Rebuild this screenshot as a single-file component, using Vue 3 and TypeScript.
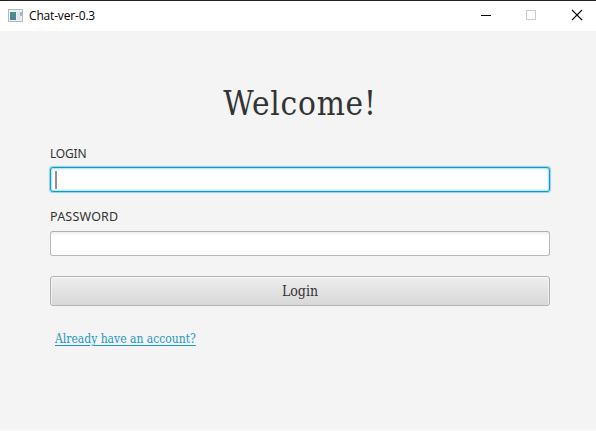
<script setup lang="ts">
import { ref } from 'vue'

const login = ref('')
const password = ref('')
</script>

<template>
  <div class="window">
    <header class="titlebar">
      <svg class="app-icon" width="16" height="14" viewBox="0 0 16 14">
        <rect x="0.5" y="0.5" width="14" height="12" fill="#eef1f4" stroke="#b4b9be" />
        <rect x="2" y="3" width="6" height="8" fill="#488e8c" />
        <rect x="2" y="8" width="6" height="3" fill="#4f7f9b" />
        <rect x="9" y="3" width="3" height="8" fill="#dce5ef" />
        <rect x="12" y="3" width="2" height="4" fill="#a3b8b9" />
      </svg>
      <span class="title">Chat-ver-0.3</span>
      <svg class="controls" width="104" height="14" viewBox="0 0 104 14" fill="none">
        <path d="M0 6.5H10" stroke="#000" />
        <rect x="45.5" y="1.5" width="9" height="9" stroke="#ccc" />
        <path d="M91 1L101 11M101 1L91 11" stroke="#000" stroke-width="1.1" />
      </svg>
    </header>
    <main class="content">
      <h1>Welcome!</h1>
      <label class="login-label" for="login">LOGIN</label>
      <div class="field focused">
        <i class="caret"></i>
        <input id="login" v-model="login" type="text" />
      </div>
      <label class="password-label" for="password">PASSWORD</label>
      <div class="field">
        <input id="password" v-model="password" type="password" />
      </div>
      <button type="button">Login</button>
      <a class="link">Already have an account?</a>
    </main>
  </div>
</template>

<style>
body {
  background: #f4f4f4;
}
</style>

<style scoped>
.window {
  box-sizing: border-box;
  height: 431px;
  overflow: hidden;
  border-top: 1px solid #232323;
  border-bottom: 1px solid #fcfcfc;
  background: #f4f4f4;
}
.titlebar {
  display: flex;
  align-items: center;
  box-sizing: border-box;
  height: 30px;
  padding: 0 11px 0 8px;
  background: #fff;
}
.title {
  margin-left: 5px;
  font: 12px/16px "Open Sans", sans-serif;
  letter-spacing: -0.17px;
  color: #000;
}
.controls {
  margin-left: auto;
}
.content {
  display: flex;
  flex-direction: column;
  padding: 46px 46px 0 50px;
}
h1 {
  margin: 0;
  height: 54px;
  font: 400 33px/54px "DejaVu Serif Condensed", "DejaVu Serif", serif;
  font-stretch: condensed;
  letter-spacing: 0.8px;
  text-align: center;
  color: #333;
}
label {
  align-self: flex-start;
  height: 18px;
  font: 12px/18px "Noto Sans", sans-serif;
  color: #333;
}
.login-label {
  margin-top: 14px;
  letter-spacing: -0.2px;
}
.password-label {
  margin-top: 16px;
  font-size: 12.5px;
  letter-spacing: 0.2px;
}
.field {
  display: flex;
  align-items: center;
  box-sizing: border-box;
  height: 25px;
  margin-top: 5px;
  padding: 0 4px;
  border: 1px solid #b9b9b9;
  border-top-color: #b0b0b0;
  border-radius: 3px;
  background: linear-gradient(#f0f0f0, #fff 4px);
}
.login-label + .field {
  margin-top: 4px;
}
.focused {
  border-color: #1698c0;
  background: #fff;
  box-shadow: 0 0 1px 1px #8dd3ea, inset 0 0 0 1px #b5e8f6, inset 0 0 1px 2px #e4f7fb;
}
.caret {
  width: 2px;
  height: 18px;
  background: #929292;
}
input {
  flex: 1;
  min-width: 0;
  border: 0;
  padding: 0;
  outline: 0;
  background: transparent;
}
button {
  height: 30px;
  margin-top: 20px;
  padding: 0;
  border: 1px solid #b2b2b2;
  border-radius: 3px;
  background: linear-gradient(#eee, #d8d8d8);
  box-shadow: inset 0 1px #f8f8f8, inset 1px 0 #efefef, inset -1px 0 #efefef;
  font: 14px/28px "DejaVu Serif Condensed", "DejaVu Serif", serif;
  font-stretch: condensed;
  color: #333;
}
.link {
  align-self: flex-start;
  margin: 24px 0 0 5px;
  font: 12px/18px "DejaVu Serif Condensed", "DejaVu Serif", serif;
  font-stretch: condensed;
  color: #1b98c3;
  text-decoration: underline;
  text-underline-offset: 1.5px;
}
</style>
